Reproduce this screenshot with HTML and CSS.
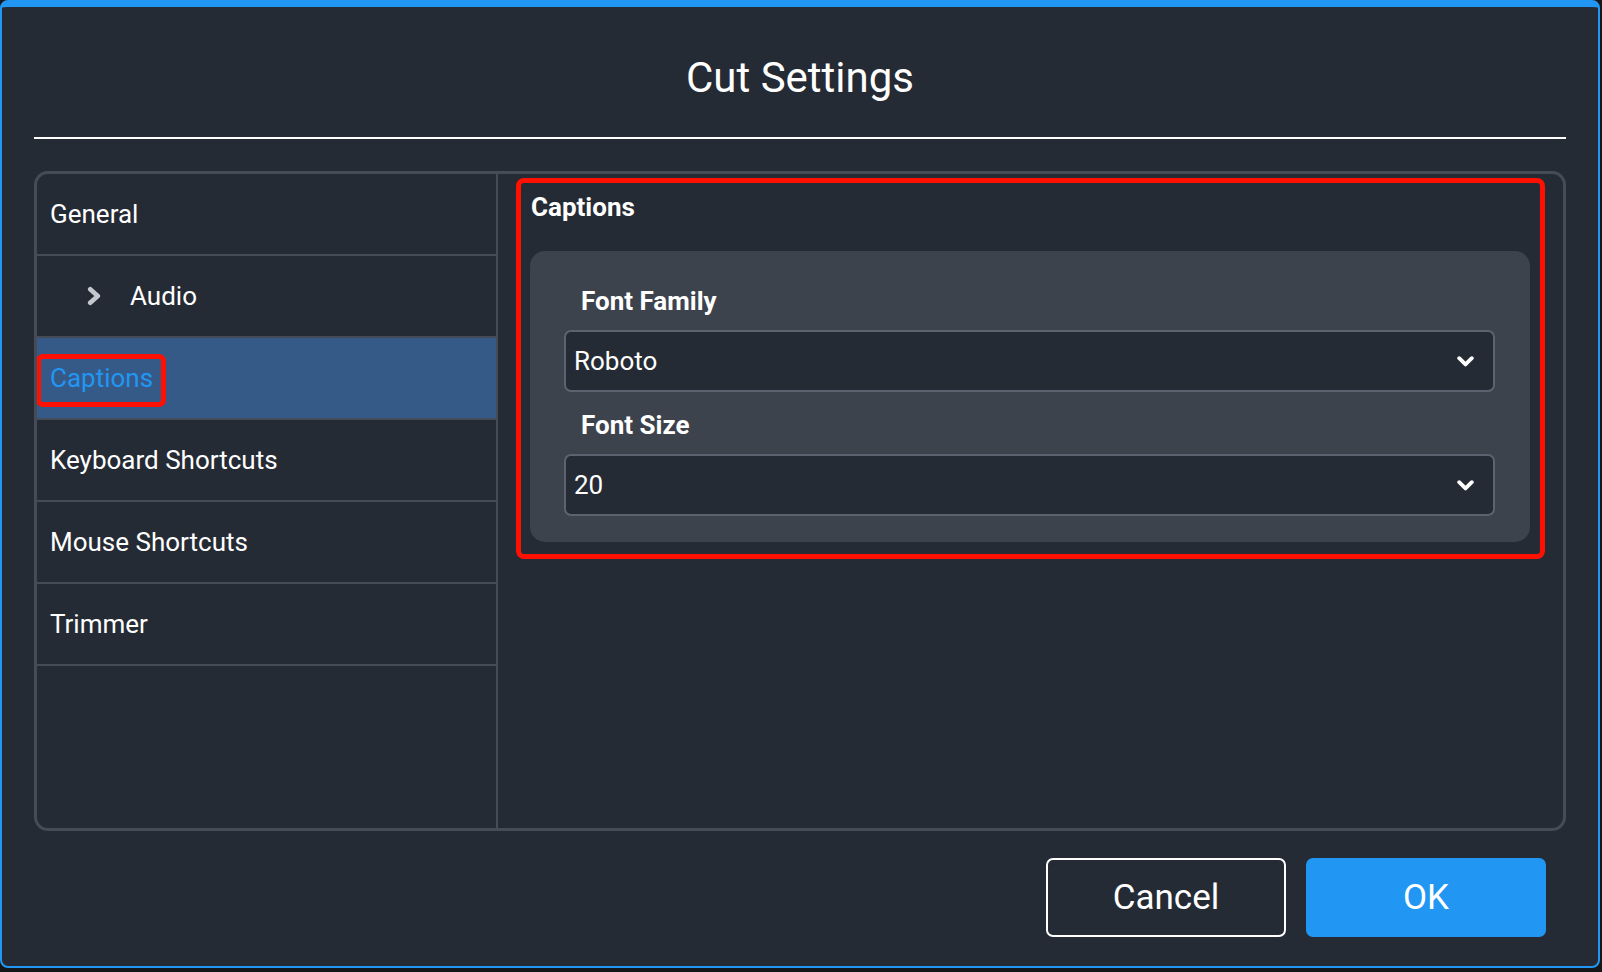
FILE: index.html
```html
<!DOCTYPE html>
<html lang="en">
<head>
<meta charset="utf-8">
<title>Cut Settings</title>
<link rel="stylesheet" href="styles.css">
</head>
<body>
<div class="window">
  <h1 class="title">Cut Settings</h1>
  <div class="rule"></div>

  <div class="panel">
    <nav class="sidebar">
      <div class="nav-item">General</div>
      <div class="nav-item sub">
        <svg class="caret-right" width="15" height="20" viewBox="0 0 15 20" aria-hidden="true">
          <path d="M3.2 3.2 L10.8 10 L3.2 16.8" fill="none" stroke="#c4c8cf" stroke-width="4.6" stroke-linecap="round" stroke-linejoin="round"/>
        </svg>
        <span>Audio</span>
      </div>
      <div class="nav-item active"><span class="mark">Captions</span></div>
      <div class="nav-item">Keyboard Shortcuts</div>
      <div class="nav-item">Mouse Shortcuts</div>
      <div class="nav-item">Trimmer</div>
    </nav>

    <section class="content">
      <div class="callout">
        <h2 class="section-title">Captions</h2>
        <div class="card">
          <div class="field-label">Font Family</div>
          <div class="select">
            <span>Roboto</span>
            <svg width="17" height="11" viewBox="0 0 17 11" aria-hidden="true">
              <path d="M2.2 2.2 L8.5 8.4 L14.8 2.2" fill="none" stroke="#fff" stroke-width="3.8" stroke-linecap="round" stroke-linejoin="round"/>
            </svg>
          </div>
          <div class="field-label gap">Font Size</div>
          <div class="select">
            <span>20</span>
            <svg width="17" height="11" viewBox="0 0 17 11" aria-hidden="true">
              <path d="M2.2 2.2 L8.5 8.4 L14.8 2.2" fill="none" stroke="#fff" stroke-width="3.8" stroke-linecap="round" stroke-linejoin="round"/>
            </svg>
          </div>
        </div>
      </div>
    </section>
  </div>

  <footer class="footer">
    <button class="btn btn-outline">Cancel</button>
    <button class="btn btn-primary">OK</button>
  </footer>
</div>
</body>
</html>
```

FILE: styles.css
```css
html, body {
  margin: 0;
  padding: 0;
}

body {
  background: #15171a;
  font-family: Roboto, "Liberation Sans", Arial, sans-serif;
  color: #ffffff;
}

/* dialog frame */
.window {
  box-sizing: border-box;
  width: 1600px;
  height: 968px;
  border: 2px solid #2196f3;
  border-top-width: 7px;
  border-radius: 8px;
  background: #252b34;
  padding: 0 32px;
  display: flex;
  flex-direction: column;
}

.title {
  margin: 0;
  padding-top: 47px;
  font-size: 42px;
  line-height: 48px;
  font-weight: 400;
  text-align: center;
}

.rule {
  margin-top: 35px;
  height: 2px;
  background: #ffffff;
}

/* settings panel */
.panel {
  box-sizing: border-box;
  margin-top: 32px;
  height: 660px;
  border: 3px solid #464c57;
  border-radius: 14px;
  display: flex;
  overflow: hidden;
}

.sidebar {
  box-sizing: border-box;
  width: 461px;
  flex: none;
  border-right: 2px solid #464c57;
}

.nav-item {
  box-sizing: border-box;
  height: 82px;
  border-bottom: 2px solid #464c57;
  padding-left: 13px;
  display: flex;
  align-items: center;
  font-size: 26px;
  line-height: 30px;
}

.nav-item.sub {
  padding-left: 50px;
}

.caret-right {
  margin-right: 28px;
  flex: none;
}

.nav-item.active {
  background: #365a87;
  color: #2196f3;
}

.mark {
  position: relative;
}

.mark::after {
  content: "";
  position: absolute;
  left: -14px;
  right: -13px;
  top: -9px;
  bottom: -14px;
  border: 5px solid #ff1000;
  border-radius: 7px;
}

/* right-hand content */
.content {
  flex: 1;
  padding: 4px 18px 0 18px;
}

.callout {
  border: 5px solid #ff1000;
  border-radius: 8px;
  padding: 9px 10px 12px 9px;
}

.section-title {
  margin: 0 0 29px 1px;
  font-size: 26px;
  line-height: 30px;
  font-weight: 700;
}

.card {
  background: #3c434d;
  border-radius: 15px;
  padding: 35px 35px 26px 34px;
}

.field-label {
  padding-left: 17px;
  margin-bottom: 14px;
  font-size: 26px;
  line-height: 30px;
  font-weight: 700;
}

.field-label.gap {
  margin-top: 18px;
}

.select {
  box-sizing: border-box;
  height: 62px;
  border: 2px solid #5b6370;
  border-radius: 7px;
  background: #252b34;
  display: flex;
  align-items: center;
  justify-content: space-between;
  padding: 0 19px 0 8px;
  font-size: 26px;
  line-height: 30px;
}

.select svg {
  flex: none;
}

/* dialog buttons */
.footer {
  margin-top: 27px;
  padding-right: 20px;
  display: flex;
  justify-content: flex-end;
  gap: 20px;
}

.btn {
  box-sizing: border-box;
  width: 240px;
  height: 79px;
  border-radius: 7px;
  font-family: Roboto, "Liberation Sans", Arial, sans-serif;
  font-size: 35px;
  color: #ffffff;
  cursor: pointer;
}

.btn-outline {
  background: transparent;
  border: 2px solid #ffffff;
}

.btn-primary {
  background: #2196f3;
  border: none;
}
```
